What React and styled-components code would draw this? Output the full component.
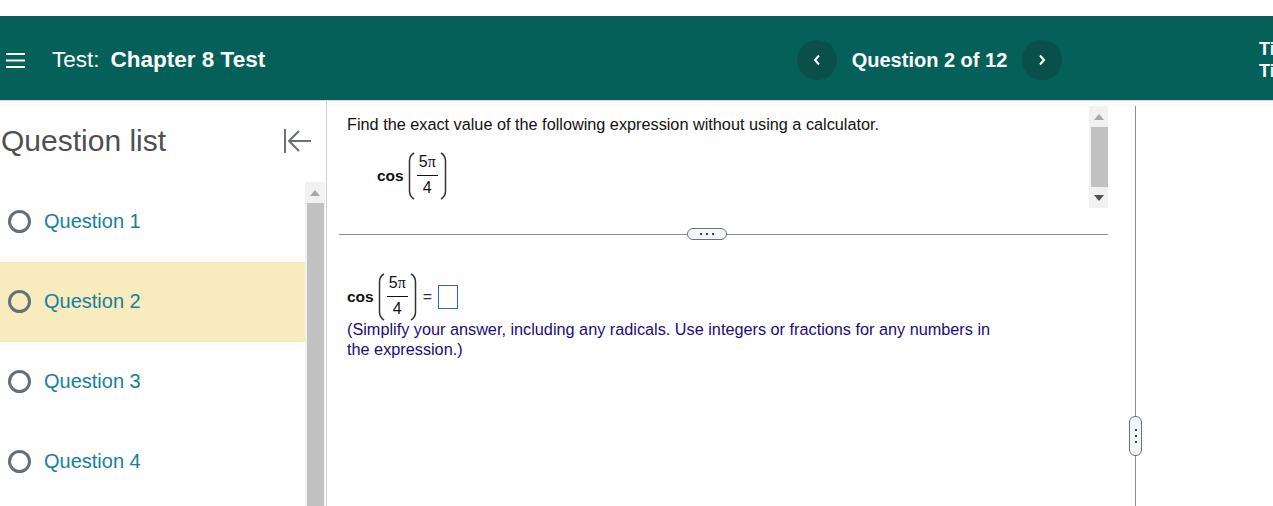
import styled, { createGlobalStyle } from "styled-components";

const questions = [1, 2, 3, 4];

const GlobalStyle = createGlobalStyle`
    html, body {
        margin: 0;
        height: 100%;
        background: #fff;
        overflow: hidden;
    }
    body {
        font-family: "Liberation Sans", Arial, sans-serif;
    }
`;

function Paren({ flip }) {
    return (
        <ParenSvg viewBox="0 0 7 48" $flip={flip} aria-hidden="true">
            <path d="M6 1 C2.500 3 1.500 5 1.500 9 V39 C1.500 43 2.500 45 6 47" fill="none" stroke="#333" strokeWidth="1.5" />
        </ParenSvg>
    );
}

function CosExpression() {
    return (
        <>
            <Cos>cos</Cos>
            <Paren />
            <Fraction>
                <Numerator>5<Pi>π</Pi></Numerator>
                <Denominator>4</Denominator>
            </Fraction>
            <Paren flip />
        </>
    );
}

function App() {
    return (
        <Page>
            <GlobalStyle />

            {/* TOP BAR */}
            <TopBar>
                <TitleGroup>
                    <MenuButton aria-label="menu">
                        <svg width="19" height="17" viewBox="0 0 19 17">
                            <path d="M0 2h19M0 8.500h19M0 15h19" stroke="#fff" strokeWidth="2" />
                        </svg>
                    </MenuButton>
                    <TestLabel>Test:</TestLabel>
                    <TestName>Chapter 8 Test</TestName>
                </TitleGroup>
                <QuestionNav>
                    <NavButton aria-label="previous question">
                        <svg width="8" height="12" viewBox="0 0 8 12">
                            <path d="M6 1.500 2 6l4 4.500" fill="none" stroke="#fff" strokeWidth="2" />
                        </svg>
                    </NavButton>
                    <NavLabel>Question 2 of 12</NavLabel>
                    <NavButton aria-label="next question">
                        <svg width="8" height="12" viewBox="0 0 8 12">
                            <path d="M2 1.500 6 6l-4 4.500" fill="none" stroke="#fff" strokeWidth="2" />
                        </svg>
                    </NavButton>
                </QuestionNav>
                <Timer>
                    <span>Time Remaining</span>
                    <span>Time Limit</span>
                </Timer>
            </TopBar>

            <Body>
                {/* QUESTION LIST */}
                <Sidebar>
                    <SidebarHead>
                        <SidebarTitle>Question list</SidebarTitle>
                        <CollapseButton aria-label="collapse question list">
                            <svg width="30" height="26" viewBox="0 0 30 26">
                                <path d="M2 1v24M28 13H6M16 3 6 13l10 10" fill="none" stroke="#6b7077" strokeWidth="2" />
                            </svg>
                        </CollapseButton>
                    </SidebarHead>
                    <ListArea>
                        <List>
                            {questions.map((n) => (
                                <Row key={n} $active={n === 2}>
                                    <Radio />
                                    <RowLabel>Question {n}</RowLabel>
                                </Row>
                            ))}
                        </List>
                        <ListScroll>
                            <ScrollArrow><UpArrow /></ScrollArrow>
                            <ListThumb />
                        </ListScroll>
                    </ListArea>
                </Sidebar>

                {/* QUESTION + ANSWER */}
                <Main>
                    <Work>
                        <QuestionPane>
                            <QuestionBody>
                                <Prompt>Find the exact value of the following expression without using a calculator.</Prompt>
                                <MathLine $indent>
                                    <CosExpression />
                                </MathLine>
                            </QuestionBody>
                            <PaneScroll>
                                <ScrollArrow><UpArrow /></ScrollArrow>
                                <PaneThumb />
                                <ScrollArrow><DownArrow /></ScrollArrow>
                            </PaneScroll>
                        </QuestionPane>

                        <HSplit>
                            <HGrip>
                                <Dot /><Dot /><Dot />
                            </HGrip>
                        </HSplit>

                        <AnswerPane>
                            <MathLine>
                                <CosExpression />
                                <Equals>=</Equals>
                                <AnswerBox />
                            </MathLine>
                            <Hint>
                                (Simplify your answer, including any radicals. Use integers or fractions for any numbers in the expression.)
                            </Hint>
                        </AnswerPane>
                    </Work>

                    <VSplit>
                        <VGrip>
                            <Dot /><Dot /><Dot />
                        </VGrip>
                    </VSplit>
                </Main>
            </Body>
        </Page>
    );
}

const Page = styled.div`
    height: 506px;
    padding-top: 16px;
    box-sizing: border-box;
    display: flex;
    flex-direction: column;
    overflow: hidden;
`;

const TopBar = styled.header`
    flex: none;
    height: 84px;
    box-sizing: border-box;
    padding-top: 4px;
    background: #046058;
    color: #fff;
    display: flex;
    align-items: center;
    overflow: hidden;
`;

const TitleGroup = styled.div`
    width: 797px;
    flex: none;
    display: flex;
    align-items: center;
    padding-left: 6px;
    box-sizing: border-box;
`;

const MenuButton = styled.div`
    display: flex;
    margin-right: 27px;
`;

const TestLabel = styled.span`
    font-size: 22.5px;
    margin-right: 11px;
`;

const TestName = styled.span`
    font-size: 22.5px;
    font-weight: 700;
`;

const QuestionNav = styled.nav`
    width: 265px;
    flex: none;
    display: flex;
    align-items: center;
    justify-content: space-between;
`;

const NavButton = styled.div`
    width: 40px;
    height: 40px;
    border-radius: 50%;
    background: #0b4f4b;
    display: flex;
    align-items: center;
    justify-content: center;
`;

const NavLabel = styled.span`
    font-size: 20px;
    font-weight: 700;
`;

const Timer = styled.div`
    margin-left: 197px;
    flex: none;
    display: flex;
    flex-direction: column;
    font-size: 18px;
    font-weight: 700;
    line-height: 22px;
    white-space: nowrap;
`;

const Body = styled.div`
    flex: 1;
    min-height: 0;
    display: flex;
    border-top: 1px solid #d9dde2;
`;

const Sidebar = styled.aside`
    width: 327px;
    flex: none;
    box-sizing: border-box;
    border-right: 1px solid #ccd2dc;
    display: flex;
    flex-direction: column;
    overflow: hidden;
`;

const SidebarHead = styled.div`
    height: 81px;
    flex: none;
    box-sizing: border-box;
    display: flex;
    align-items: center;
    justify-content: space-between;
    padding: 0 13px 2px 1px;
`;

const SidebarTitle = styled.h2`
    margin: 0;
    font-size: 30px;
    font-weight: 400;
    color: #4f4f4f;
`;

const CollapseButton = styled.div`
    display: flex;
`;

const ListArea = styled.div`
    flex: 1;
    display: flex;
    min-height: 0;
`;

const List = styled.ul`
    margin: 0;
    padding: 0;
    list-style: none;
    width: 305px;
    flex: none;
`;

const Row = styled.li`
    height: 80px;
    box-sizing: border-box;
    display: flex;
    align-items: center;
    padding: 0 0 2px 8px;
    background: ${(p) => (p.$active ? "#f8ebbd" : "transparent")};
`;

const Radio = styled.span`
    width: 23px;
    height: 23px;
    box-sizing: border-box;
    border: 3px solid #647079;
    border-radius: 50%;
    margin-right: 13px;
`;

const RowLabel = styled.span`
    font-size: 20px;
    color: #15809c;
`;

const ScrollArrow = styled.div`
    height: 21px;
    flex: none;
    display: flex;
    align-items: center;
    justify-content: center;
`;

const ListScroll = styled.div`
    width: 20px;
    background: #f1f1f1;
    display: flex;
    flex-direction: column;
`;

const ListThumb = styled.div`
    flex: 1;
    margin-left: 2px;
    width: 17px;
    background: #c1c1c1;
`;

const Arrow = styled.svg`
    width: 10px;
    height: 6px;
`;

const UpArrow = () => (
    <Arrow viewBox="0 0 10 6"><path d="M5 0 10 6H0z" fill="#a8a8a8" /></Arrow>
);

const DownArrow = () => (
    <Arrow viewBox="0 0 10 6"><path d="M0 0h10L5 6z" fill="#505050" /></Arrow>
);

const Main = styled.main`
    flex: 1;
    min-width: 0;
    display: flex;
    padding: 5px 0 0 12px;
`;

const Work = styled.div`
    width: 769px;
    flex: none;
    display: flex;
    flex-direction: column;
`;

const QuestionPane = styled.section`
    height: 102px;
    flex: none;
    display: flex;
    justify-content: space-between;
`;

const QuestionBody = styled.div`
    padding: 8px 0 0 8px;
`;

const Prompt = styled.p`
    margin: 0 0 18px;
    font-size: 16.25px;
    line-height: 20px;
    color: #111;
`;

const PaneScroll = styled.div`
    width: 19px;
    background: #f1f1f1;
    display: flex;
    flex-direction: column;
`;

const PaneThumb = styled.div`
    flex: 1;
    margin-left: 2px;
    width: 17px;
    background: #c1c1c1;
`;

const HSplit = styled.div`
    height: 1px;
    margin-top: 26px;
    flex: none;
    background: #878d9a;
    position: relative;
`;

const HGrip = styled.div`
    position: absolute;
    left: 348px;
    top: -6px;
    width: 40px;
    height: 12px;
    box-sizing: border-box;
    border: 1px solid #6b7280;
    border-radius: 6px;
    background: #f4f5f7;
    display: flex;
    align-items: center;
    justify-content: center;
    gap: 4px;
`;

const Dot = styled.span`
    width: 2px;
    height: 2px;
    background: #3c4450;
`;

const AnswerPane = styled.section`
    padding: 38px 0 0 8px;
`;

const MathLine = styled.div`
    display: flex;
    align-items: center;
    height: 48px;
    padding-left: ${(p) => (p.$indent ? "30px" : "0")};
`;

const Cos = styled.span`
    font-size: 15.5px;
    font-weight: 700;
    color: #111;
    margin-right: 4px;
`;

const ParenSvg = styled.svg`
    width: 7px;
    height: 48px;
    transform: ${(p) => (p.$flip ? "scaleX(-1)" : "none")};
`;

const Fraction = styled.span`
    display: inline-flex;
    flex-direction: column;
    align-items: center;
    width: 21px;
    margin: 0 2px;
`;

const Numerator = styled.span`
    width: 100%;
    text-align: center;
    font-size: 16px;
    line-height: 20px;
    color: #111;
    border-bottom: 1px solid #111;
    padding-bottom: 3px;
`;

const Pi = styled.span`
    font-family: "Liberation Serif", "Times New Roman", serif;
`;

const Denominator = styled.span`
    font-size: 16px;
    line-height: 23px;
    padding-bottom: 1px;
    color: #111;
`;

const Equals = styled.span`
    font-size: 16px;
    color: #333;
    margin: 0 6px;
`;

const AnswerBox = styled.span`
    width: 20px;
    height: 24px;
    box-sizing: border-box;
    border: 1.5px solid #2f62c8;
    background: #fff;
`;

const Hint = styled.p`
    margin: -2px 0 0;
    max-width: 650px;
    font-size: 16.25px;
    line-height: 20px;
    color: #1c0a80;
`;

const VSplit = styled.div`
    width: 1px;
    margin-left: 27px;
    flex: none;
    background: #878d9a;
    position: relative;
`;

const VGrip = styled.div`
    position: absolute;
    left: -6px;
    top: 310px;
    width: 13px;
    height: 40px;
    box-sizing: border-box;
    border: 1px solid #6b7280;
    border-radius: 6px;
    background: #f4f5f7;
    display: flex;
    flex-direction: column;
    align-items: center;
    justify-content: center;
    gap: 4px;
`;

export default App;
